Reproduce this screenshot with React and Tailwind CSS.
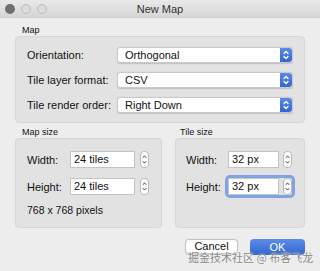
import React from 'react';

const font = { fontFamily: '"Liberation Sans", Arial, sans-serif' };

const BlueArrows = () => (
  <div className="w-[12px] h-full rounded-r-[3px] bg-gradient-to-b from-[#5a8ae6] to-[#3466cc] flex items-center justify-center">
    <svg width="12" height="16" viewBox="0 0 12 16" fill="none" stroke="white" strokeWidth="1.3" strokeLinecap="round" strokeLinejoin="round">
      <path d="M4 6.5 L6 4.5 L8 6.5" />
      <path d="M4 9.5 L6 11.5 L8 9.5" />
    </svg>
  </div>
);

const Stepper = () => (
  <div className="w-[9px] h-[17px] rounded-[4px] border border-[#b9b9b9] bg-white flex items-center justify-center">
    <svg width="7" height="15" viewBox="0 0 7 15" fill="none" stroke="#333" strokeWidth="1" strokeLinecap="round" strokeLinejoin="round">
      <path d="M2 5.5 L3.5 4 L5 5.5" />
      <path d="M2 9.5 L3.5 11 L5 9.5" />
    </svg>
  </div>
);

const Combo = ({ value }) => (
  <div className="w-[176px] h-[16px] flex bg-white border border-[#c9c9c9] rounded-[3px] shadow-[0_0.5px_1px_rgba(0,0,0,0.15)]">
    <div className="flex-1 pl-[7px] text-[11px] leading-[14px] text-[#111]">{value}</div>
    <BlueArrows />
  </div>
);

const Field = ({ value, w }) => (
  <div className={`${w} h-[17px] bg-white border border-[#c4c4c4] pl-[3px] text-[11px] leading-[15px] text-[#111]`}>{value}</div>
);

const Light = ({ dark }) => (
  <div className={dark ? 'w-[10px] h-[10px] rounded-full bg-[#6e6e6e]' : 'w-[10px] h-[10px] rounded-full bg-[#dcdcdc] border border-[#bdbdbd]'} />
);

export default function App() {
  return (
    <div className="relative w-[320px] h-[271px] bg-[#ededed] flex flex-col text-[#111]" style={font}>
      {/* Title bar */}
      <div className="h-[18px] grid grid-cols-[1fr_auto_1fr] items-center bg-gradient-to-b from-[#e9e9e9] to-[#d6d6d6] border-b border-[#cfcfcf]">
        <div className="flex items-center gap-[6px] pl-[5px]">
          <Light dark />
          <Light />
          <Light />
        </div>
        <div className="text-[11px] leading-[14px] text-[#333]">New Map</div>
        <div />
      </div>

      <div className="flex flex-col px-[15px]">
        <div className="mt-[6px] h-[12px] pl-[7px] text-[9px] leading-[12px] font-medium">Map</div>
        <div className="w-[290px] bg-[#e2e2e2] border border-[#d6d6d6] rounded-[4px] pl-[11px] pt-[10px] pb-[9px] flex flex-col gap-[9px]">
          {[
            ['Orientation:', 'Orthogonal'],
            ['Tile layer format:', 'CSV'],
            ['Tile render order:', 'Right Down'],
          ].map(([l, v]) => (
            <div key={l} className="flex items-center h-[16px]">
              <div className="w-[90px] text-[11px] leading-[14px]">{l}</div>
              <Combo value={v} />
            </div>
          ))}
        </div>

        <div className="flex gap-[13px] mt-[3px]">
          <div className="flex flex-col">
            <div className="h-[12px] pl-[7px] text-[9px] leading-[12px] font-medium">Map size</div>
            <div className="w-[147px] h-[90px] bg-[#e2e2e2] border border-[#d6d6d6] rounded-[4px] pl-[11px] pt-[12px] flex flex-col gap-[10px]">
              {['Width:', 'Height:'].map((l) => (
                <div key={l} className="flex items-center gap-[5px]">
                  <div className="w-[38px] text-[11px] leading-[14px]">{l}</div>
                  <Field value="24 tiles" w="w-[65px]" />
                  <Stepper />
                </div>
              ))}
              <div className="-mt-[2px] text-[10.5px] leading-[14px]">768 x 768 pixels</div>
            </div>
          </div>

          <div className="flex flex-col">
            <div className="h-[12px] pl-[5px] text-[9px] leading-[12px] font-medium">Tile size</div>
            <div className="w-[130px] h-[90px] bg-[#e2e2e2] border border-[#d6d6d6] rounded-[4px] pl-[10px] pt-[12px] flex flex-col gap-[10px]">
              <div className="flex items-center">
                <div className="w-[42px] text-[11px] leading-[14px]">Width:</div>
                <div className="flex items-center gap-[4px]">
                  <Field value="32 px" w="w-[51px]" />
                  <Stepper />
                </div>
              </div>
              <div className="flex items-center">
                <div className="w-[42px] text-[11px] leading-[14px]">Height:</div>
                <div className="flex items-center gap-[4px] rounded-[2px] ring-[3px] ring-[#7fa3e3]">
                  <Field value="32 px" w="w-[51px]" />
                  <Stepper />
                </div>
              </div>
            </div>
          </div>
        </div>

        <div className="flex justify-end gap-[12px] mt-[11px]">
          <div className="w-[53px] h-[15px] bg-white border border-[#c3c3c3] rounded-[4px] text-[11px] leading-[13px] text-center shadow-[0_0.5px_1px_rgba(0,0,0,0.15)]">Cancel</div>
          <div className="w-[55px] h-[16px] bg-gradient-to-b from-[#5b8ce8] to-[#3467cf] rounded-[4px] text-[11px] leading-[16px] text-center text-white">OK</div>
        </div>
      </div>

      {/* watermark */}
      <div className="absolute left-[188px] top-[250px] text-[11px] leading-[14px] text-[#8a8a8a] whitespace-nowrap [text-shadow:0_0_2px_white]" style={{ fontFamily: '"Noto Sans CJK SC", sans-serif' }}>
        掘金技术社区 @ 布客飞龙
      </div>
    </div>
  );
}
